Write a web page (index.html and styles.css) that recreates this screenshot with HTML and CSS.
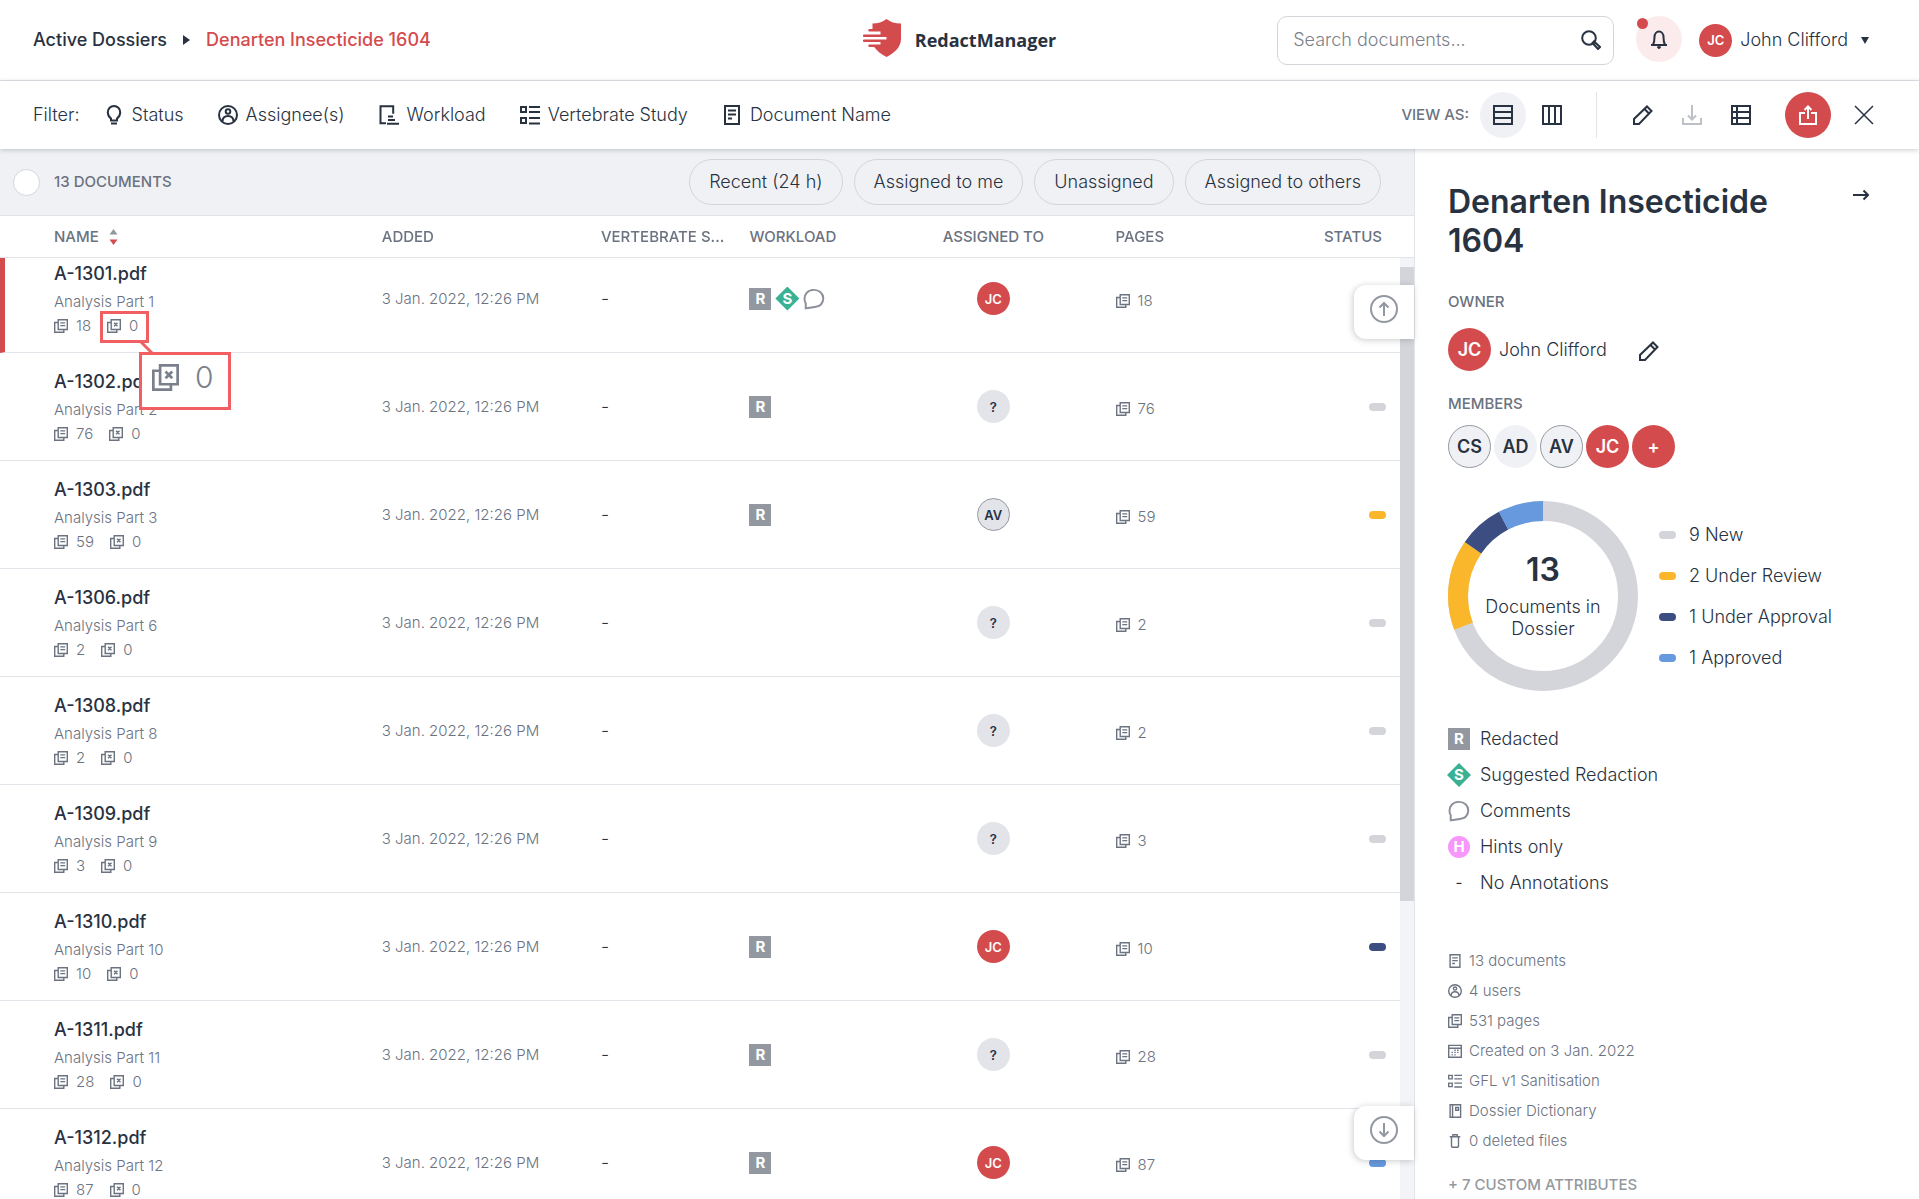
FILE: index.html
```html
<!DOCTYPE html>
<html lang="en">

<head>
    <meta charset="UTF-8">
    <meta name="viewport" content="width=device-width, initial-scale=1.0">
    <title>RedactManager</title>
    <link rel="stylesheet" href="styles.css">
</head>

<body>
    <!-- shared icons -->
    <svg class="sprite" aria-hidden="true">
        <symbol id="bulb" viewBox="0 0 20 20">
            <path d="M7 15.500v-2C5 12 3.800 10 3.800 7.200a6.200 6.200 0 0 1 12.400 0C16.200 10 15 12 13 13.500v2zM7 18.500h6" />
        </symbol>
        <symbol id="user" viewBox="0 0 20 20">
            <circle cx="10" cy="10" r="9" />
            <circle cx="10" cy="6.500" r="2.300" />
            <path d="M4.500 16.500c0-3.500 2.300-5.500 5.500-5.500s5.500 2 5.500 5.500" />
        </symbol>
        <symbol id="workload" viewBox="0 0 20 20">
            <path d="M7 18.200H1.500V1.300h12.700v7.500M9 11.500h5M9 15h7M8 18.700h12" />
        </symbol>
        <symbol id="list" viewBox="0 0 20 20">
            <path d="M1 2h5v5H1zM1 13h5v5H1zM9 2h11M9 7h11M9 13h11M9 18.500h11" />
        </symbol>
        <symbol id="doc" viewBox="0 0 20 20">
            <path d="M3 1h14v18H3zM6 5.500h8M6 9.500h8M6 13.500h4" />
        </symbol>
        <symbol id="pages" viewBox="0 0 20 20">
            <path d="M6 1h13v14H6zM6 5H1v14h13v-4M9 5.500h7M9 9.500h7" />
        </symbol>
        <symbol id="excluded" viewBox="0 0 20 20">
            <path d="M6 1h13v14H6zM6 5H1v14h13v-4M10 5.500l5 5M15 5.500l-5 5" />
        </symbol>
        <symbol id="pencil" viewBox="0 0 20 20">
            <path d="M1 19v-5L14 1.500l4.500 4.500L6 19zM11.500 4l4.500 4.500" />
        </symbol>
        <symbol id="comment" viewBox="0 0 20 20">
            <path d="M2.500 18.500V14C.8 11.500 1 7.300 3.300 4.500 6.200 1 12.500.8 16 3.800c3.200 3 3.200 8.200.3 11.200-3 3-8.300 2.300-13.800 3.500z" />
        </symbol>
        <symbol id="calendar" viewBox="0 0 20 20">
            <path d="M1 2h18v17H1zM1 6h18M5 15.500h2M9 15.500h2M9 12h2M13 12h2M13 9h2M9 9h2M5 12h2" />
        </symbol>
        <symbol id="book" viewBox="0 0 20 20">
            <path d="M3 1h15v18H3zM6.500 1v18M11 5h4v4h-4z" />
        </symbol>
        <symbol id="trash" viewBox="0 0 20 20">
            <path d="M2.500 4h15M5 4v13.500L6 19h8l1-1.500V4M7 3V1h6v2" />
        </symbol>
    </svg>

    <header class="header">
        <nav class="breadcrumbs">
            <a href="#">Active Dossiers</a>
            <svg class="crumb-arrow" viewBox="0 0 7 10"><path d="M0 0l7 5-7 5z" /></svg>
            <a href="#" class="current">Denarten Insecticide 1604</a>
        </nav>
        <a href="#" class="logo">
            <svg viewBox="0 0 38 38">
                <path class="shield" d="M23.500 0c4 3 8.500 4.500 14.500 4.500V20c0 8.500-7 14-14.500 18-5.500-3-9.500-6-12.300-10H6.500a1 1 0 0 1 0-2.500H17.500V23H1a1 1 0 0 1 0-2.500H23.500V18H1a1 1 0 0 1 0-2.500H17.500V12.500H6.500a1 1 0 0 1 0-2.500h3V4.500C15 4.500 19.500 3 23.500 0z" />
            </svg>
            <span>RedactManager</span>
        </a>
        <div class="header-right">
            <div class="search">
                <input type="text" aria-label="Search documents" placeholder="Search documents...">
                <svg class="icon" viewBox="0 0 20 20"><circle cx="8" cy="8" r="6.800" /><path d="M11.500 13l1.500-1.500 6 5.500-2 2z" /></svg>
            </div>
            <button class="round bell" type="button" aria-label="Notifications">
                <svg class="icon" viewBox="0 0 20 20"><path d="M2 16h16M4 16c1-2 1.500-4 1.500-8a4.500 5.500 0 0 1 9 0c0 4 .5 6 1.500 8M8.500 17.500l1.500 1.500 1.500-1.500" /></svg>
                <span class="bell-dot"></span>
            </button>
            <button class="user-menu" type="button">
                <span class="avatar red">JC</span>
                <span>John Clifford</span>
                <svg class="caret" viewBox="0 0 8 7"><path d="M0 0h8L4 7z" /></svg>
            </button>
        </div>
    </header>

    <div class="toolbar">
        <div class="filters">
            <span>Filter:</span>
            <button type="button"><svg class="icon"><use href="#bulb" /></svg>Status</button>
            <button type="button"><svg class="icon"><use href="#user" /></svg>Assignee(s)</button>
            <button type="button"><svg class="icon"><use href="#workload" /></svg>Workload</button>
            <button type="button"><svg class="icon"><use href="#list" /></svg>Vertebrate Study</button>
            <button type="button"><svg class="icon"><use href="#doc" /></svg>Document Name</button>
        </div>
        <div class="actions">
            <span class="caps">View as:</span>
            <button class="round selected" type="button" aria-label="List view">
                <svg class="icon" viewBox="0 0 20 20"><path d="M1 1h18v18H1zM1 7h18M1 13h18" /></svg>
            </button>
            <button class="round" type="button" aria-label="Board view">
                <svg class="icon" viewBox="0 0 20 20"><path d="M1 1h18v18H1zM7 1v18M13 1v18" /></svg>
            </button>
            <span class="divider"></span>
            <button class="round" type="button" aria-label="Edit dossier"><svg class="icon"><use href="#pencil" /></svg></button>
            <button class="round" type="button" aria-label="Download" disabled>
                <svg class="icon" viewBox="0 0 20 20"><path d="M1 13v6h18v-6M10 0v14M6 10.500l4 4 4-4" /></svg>
            </button>
            <button class="round" type="button" aria-label="Report">
                <svg class="icon" viewBox="0 0 20 20"><path d="M1 1h18v18H1zM6 1v18M1 7h18M1 13h18" /></svg>
            </button>
            <button class="round upload" type="button" aria-label="Upload">
                <svg class="icon" viewBox="0 0 20 20"><path d="M7 8H2v11h16V8h-5M10 14V1M6.500 5L10 1.500 13.500 5" /></svg>
            </button>
            <button class="round close" type="button" aria-label="Close">
                <svg class="icon" viewBox="0 0 20 20"><path d="M1 1l18 18M19 1L1 19" /></svg>
            </button>
        </div>
    </div>

    <div class="content">
        <main class="documents">
            <div class="list-bar">
                <input type="checkbox" id="select-all" class="select-all">
                <label for="select-all" class="caps">13 documents</label>
                <div class="chips">
                    <button type="button">Recent (24 h)</button>
                    <button type="button">Assigned to me</button>
                    <button type="button">Unassigned</button>
                    <button type="button">Assigned to others</button>
                </div>
            </div>

            <div class="list-wrap">
                <div class="list">
                    <table>
                        <thead>
                            <tr>
                                <th class="col-name">Name
                                    <svg class="sort" viewBox="0 0 8 16"><path class="up" d="M0 5.500h8L4 0z" /><path class="down" d="M0 10.500h8L4 16z" /></svg>
                                </th>
                                <th class="col-added">Added</th>
                                <th class="col-study">Vertebrate S...</th>
                                <th class="col-workload">Workload</th>
                                <th class="col-assigned">Assigned to</th>
                                <th class="col-pages">Pages</th>
                                <th class="col-status">Status</th>
                            </tr>
                        </thead>
                        <tbody>
                            <tr class="active">
                                <td>
                                    <a href="#" class="name">A-1301.pdf</a>
                                    <div class="template">Analysis Part 1</div>
                                    <div class="stats"><svg class="icon"><use href="#pages" /></svg><span>18</span><svg class="icon"><use href="#excluded" /></svg><span>0</span></div>
                                </td>
                                <td>3 Jan. 2022, 12:26 PM</td>
                                <td class="dark">-</td>
                                <td>
                                    <div class="work"><span class="badge redacted">R</span><span class="badge suggested">S</span><svg class="icon comment"><use href="#comment" /></svg></div>
                                </td>
                                <td class="center"><span class="avatar red">JC</span></td>
                                <td><div class="page-count"><svg class="icon"><use href="#pages" /></svg>18</div></td>
                                <td class="right"><span class="dot new"></span></td>
                            </tr>
                            <tr>
                                <td>
                                    <a href="#" class="name">A-1302.pdf</a>
                                    <div class="template">Analysis Part 2</div>
                                    <div class="stats"><svg class="icon"><use href="#pages" /></svg><span>76</span><svg class="icon"><use href="#excluded" /></svg><span>0</span></div>
                                </td>
                                <td>3 Jan. 2022, 12:26 PM</td>
                                <td class="dark">-</td>
                                <td><div class="work"><span class="badge redacted">R</span></div></td>
                                <td class="center"><span class="avatar">?</span></td>
                                <td><div class="page-count"><svg class="icon"><use href="#pages" /></svg>76</div></td>
                                <td class="right"><span class="dot new"></span></td>
                            </tr>
                            <tr>
                                <td>
                                    <a href="#" class="name">A-1303.pdf</a>
                                    <div class="template">Analysis Part 3</div>
                                    <div class="stats"><svg class="icon"><use href="#pages" /></svg><span>59</span><svg class="icon"><use href="#excluded" /></svg><span>0</span></div>
                                </td>
                                <td>3 Jan. 2022, 12:26 PM</td>
                                <td class="dark">-</td>
                                <td><div class="work"><span class="badge redacted">R</span></div></td>
                                <td class="center"><span class="avatar outlined">AV</span></td>
                                <td><div class="page-count"><svg class="icon"><use href="#pages" /></svg>59</div></td>
                                <td class="right"><span class="dot review"></span></td>
                            </tr>
                            <tr>
                                <td>
                                    <a href="#" class="name">A-1306.pdf</a>
                                    <div class="template">Analysis Part 6</div>
                                    <div class="stats"><svg class="icon"><use href="#pages" /></svg><span>2</span><svg class="icon"><use href="#excluded" /></svg><span>0</span></div>
                                </td>
                                <td>3 Jan. 2022, 12:26 PM</td>
                                <td class="dark">-</td>
                                <td></td>
                                <td class="center"><span class="avatar">?</span></td>
                                <td><div class="page-count"><svg class="icon"><use href="#pages" /></svg>2</div></td>
                                <td class="right"><span class="dot new"></span></td>
                            </tr>
                            <tr>
                                <td>
                                    <a href="#" class="name">A-1308.pdf</a>
                                    <div class="template">Analysis Part 8</div>
                                    <div class="stats"><svg class="icon"><use href="#pages" /></svg><span>2</span><svg class="icon"><use href="#excluded" /></svg><span>0</span></div>
                                </td>
                                <td>3 Jan. 2022, 12:26 PM</td>
                                <td class="dark">-</td>
                                <td></td>
                                <td class="center"><span class="avatar">?</span></td>
                                <td><div class="page-count"><svg class="icon"><use href="#pages" /></svg>2</div></td>
                                <td class="right"><span class="dot new"></span></td>
                            </tr>
                            <tr>
                                <td>
                                    <a href="#" class="name">A-1309.pdf</a>
                                    <div class="template">Analysis Part 9</div>
                                    <div class="stats"><svg class="icon"><use href="#pages" /></svg><span>3</span><svg class="icon"><use href="#excluded" /></svg><span>0</span></div>
                                </td>
                                <td>3 Jan. 2022, 12:26 PM</td>
                                <td class="dark">-</td>
                                <td></td>
                                <td class="center"><span class="avatar">?</span></td>
                                <td><div class="page-count"><svg class="icon"><use href="#pages" /></svg>3</div></td>
                                <td class="right"><span class="dot new"></span></td>
                            </tr>
                            <tr>
                                <td>
                                    <a href="#" class="name">A-1310.pdf</a>
                                    <div class="template">Analysis Part 10</div>
                                    <div class="stats"><svg class="icon"><use href="#pages" /></svg><span>10</span><svg class="icon"><use href="#excluded" /></svg><span>0</span></div>
                                </td>
                                <td>3 Jan. 2022, 12:26 PM</td>
                                <td class="dark">-</td>
                                <td><div class="work"><span class="badge redacted">R</span></div></td>
                                <td class="center"><span class="avatar red">JC</span></td>
                                <td><div class="page-count"><svg class="icon"><use href="#pages" /></svg>10</div></td>
                                <td class="right"><span class="dot approval"></span></td>
                            </tr>
                            <tr>
                                <td>
                                    <a href="#" class="name">A-1311.pdf</a>
                                    <div class="template">Analysis Part 11</div>
                                    <div class="stats"><svg class="icon"><use href="#pages" /></svg><span>28</span><svg class="icon"><use href="#excluded" /></svg><span>0</span></div>
                                </td>
                                <td>3 Jan. 2022, 12:26 PM</td>
                                <td class="dark">-</td>
                                <td><div class="work"><span class="badge redacted">R</span></div></td>
                                <td class="center"><span class="avatar">?</span></td>
                                <td><div class="page-count"><svg class="icon"><use href="#pages" /></svg>28</div></td>
                                <td class="right"><span class="dot new"></span></td>
                            </tr>
                            <tr>
                                <td>
                                    <a href="#" class="name">A-1312.pdf</a>
                                    <div class="template">Analysis Part 12</div>
                                    <div class="stats"><svg class="icon"><use href="#pages" /></svg><span>87</span><svg class="icon"><use href="#excluded" /></svg><span>0</span></div>
                                </td>
                                <td>3 Jan. 2022, 12:26 PM</td>
                                <td class="dark">-</td>
                                <td><div class="work"><span class="badge redacted">R</span></div></td>
                                <td class="center"><span class="avatar red">JC</span></td>
                                <td><div class="page-count"><svg class="icon"><use href="#pages" /></svg>87</div></td>
                                <td class="right"><span class="dot approved"></span></td>
                            </tr>
                        </tbody>
                    </table>
                </div>
                <div class="track"><div class="thumb"></div></div>
                <button class="jump jump-up" type="button" aria-label="Scroll to top">
                    <svg class="icon" viewBox="0 0 28 28"><circle cx="14" cy="14" r="13" /><path d="M14 21V8M9.500 12.500L14 8l4.500 4.500" /></svg>
                </button>
                <button class="jump jump-down" type="button" aria-label="Scroll to bottom">
                    <svg class="icon" viewBox="0 0 28 28"><circle cx="14" cy="14" r="13" /><path d="M14 7v13M9.500 15.500L14 20l4.500-4.500" /></svg>
                </button>

                <!-- magnifier over the excluded pages count -->
                <div class="callout callout-small"></div>
                <svg class="callout-line" viewBox="0 0 14 12"><path d="M1 0l12 12" /></svg>
                <div class="callout callout-big">
                    <svg class="icon"><use href="#excluded" /></svg>
                    <span>0</span>
                </div>
            </div>
        </main>

        <aside class="details">
            <div class="title-row">
                <h1>Denarten Insecticide 1604</h1>
                <button class="collapse" type="button" aria-label="Collapse details">
                    <svg class="icon" viewBox="0 0 16 12"><path d="M0 6h15M10.500 1.500L15 6l-4.500 4.500" /></svg>
                </button>
            </div>

            <h2 class="caps">Owner</h2>
            <div class="owner">
                <span class="avatar large red">JC</span>
                <span>John Clifford</span>
                <button type="button" aria-label="Change owner"><svg class="icon"><use href="#pencil" /></svg></button>
            </div>

            <h2 class="caps">Members</h2>
            <div class="members">
                <span class="avatar large outlined">CS</span>
                <span class="avatar large">AD</span>
                <span class="avatar large outlined">AV</span>
                <span class="avatar large red">JC</span>
                <button class="avatar large red" type="button" aria-label="Add member">+</button>
            </div>

            <div class="chart-row">
                <div class="chart">
                    <svg viewBox="0 0 190 190">
                        <g transform="rotate(-90 95 95)">
                            <circle class="arc new" cx="95" cy="95" r="85" />
                            <circle class="arc review" cx="95" cy="95" r="85" pathLength="13" stroke-dasharray="2 11" stroke-dashoffset="-9" />
                            <circle class="arc approval" cx="95" cy="95" r="85" pathLength="13" stroke-dasharray="1 12" stroke-dashoffset="-11" />
                            <circle class="arc approved" cx="95" cy="95" r="85" pathLength="13" stroke-dasharray="1 12" stroke-dashoffset="-12" />
                        </g>
                    </svg>
                    <div class="chart-text">
                        <strong>13</strong>
                        <span>Documents in Dossier</span>
                    </div>
                </div>
                <ul class="legend">
                    <li><span class="dot new"></span>9 New</li>
                    <li><span class="dot review"></span>2 Under Review</li>
                    <li><span class="dot approval"></span>1 Under Approval</li>
                    <li><span class="dot approved"></span>1 Approved</li>
                </ul>
            </div>

            <ul class="annotations">
                <li><span class="badge redacted">R</span>Redacted</li>
                <li><span class="badge suggested">S</span>Suggested Redaction</li>
                <li><svg class="icon comment"><use href="#comment" /></svg>Comments</li>
                <li><span class="badge hint">H</span>Hints only</li>
                <li><span class="badge none">-</span>No Annotations</li>
            </ul>

            <ul class="facts">
                <li><svg class="icon"><use href="#doc" /></svg>13 documents</li>
                <li><svg class="icon"><use href="#user" /></svg>4 users</li>
                <li><svg class="icon"><use href="#pages" /></svg>531 pages</li>
                <li><svg class="icon"><use href="#calendar" /></svg>Created on 3 Jan. 2022</li>
                <li><svg class="icon"><use href="#list" /></svg>GFL v1 Sanitisation</li>
                <li><svg class="icon"><use href="#book" /></svg>Dossier Dictionary</li>
                <li><svg class="icon"><use href="#trash" /></svg>0 deleted files</li>
            </ul>

            <a href="#" class="caps more">+ 7 custom attributes</a>
        </aside>
    </div>

    <script>
        // the list opens slightly scrolled
        document.querySelector(".list").scrollTop = 13;
    </script>
</body>
</html>
```
FILE: styles.css
```css
* {
    box-sizing: border-box;
}

body {
    margin: 0;
    height: 100vh;
    display: flex;
    flex-direction: column;
    overflow: hidden;
    font-family: Inter, sans-serif;
    font-size: 18px;
    font-weight: 300;
    line-height: 24px;
    color: #283241;
    background-color: #fff;
}

a {
    color: inherit;
    text-decoration: none;
}

button {
    padding: 0;
    border: none;
    background: none;
    font: inherit;
    color: inherit;
    cursor: pointer;
}

ul {
    margin: 0;
    padding: 0;
    list-style: none;
}

h1,
h2 {
    margin: 0;
}

.sprite {
    display: none;
}

.icon {
    width: 20px;
    height: 20px;
    flex-shrink: 0;
    fill: none;
    stroke: currentColor;
    stroke-width: 2;
}

.caps {
    font-size: 15px;
    font-weight: 500;
    line-height: 20px;
    text-transform: uppercase;
    color: #6b7280;
}

/* top header */
.header {
    flex-shrink: 0;
    height: 81px;
    padding: 0 33px;
    display: grid;
    grid-template-columns: 1fr auto 1fr;
    align-items: center;
    border-bottom: 1px solid #e2e4e9;
}

.breadcrumbs {
    display: flex;
    align-items: center;
    gap: 16px;
    font-weight: 500;
}

.breadcrumbs .current {
    color: #d44b4e;
}

.crumb-arrow {
    width: 7px;
    height: 10px;
    fill: currentColor;
}

.logo {
    display: flex;
    align-items: center;
    gap: 14px;
    font-family: "Open Sans", sans-serif;
    font-weight: 700;
}

.logo svg {
    width: 38px;
    height: 38px;
    margin-bottom: 5px;
}

.shield {
    fill: #d44b4e;
}

.header-right {
    padding-right: 17px;
    display: flex;
    justify-content: flex-end;
    align-items: center;
}

.search {
    width: 337px;
    height: 49px;
    margin-right: 22px;
    padding: 0 12px 0 15px;
    display: flex;
    align-items: center;
    border: 1px solid #d3d5da;
    border-radius: 10px;
}

.search input {
    flex: 1;
    min-width: 0;
    padding: 0;
    border: none;
    outline: none;
    font: inherit;
    color: inherit;
}

.search input::placeholder {
    color: #7b818c;
}

.round {
    position: relative;
    width: 46px;
    height: 46px;
    flex-shrink: 0;
    display: flex;
    align-items: center;
    justify-content: center;
    border-radius: 50%;
}

.bell {
    margin-right: 17px;
    margin-bottom: 3px;
    background-color: #fbebec;
}

.bell-dot {
    position: absolute;
    top: 2px;
    left: 1px;
    width: 11px;
    height: 11px;
    border-radius: 50%;
    background-color: #d44b4e;
}

.user-menu {
    display: flex;
    align-items: center;
    gap: 8px;
}

.caret {
    width: 8px;
    height: 7px;
    margin-left: 5px;
    fill: currentColor;
}

.avatar {
    width: 33px;
    height: 33px;
    flex-shrink: 0;
    display: inline-flex;
    align-items: center;
    justify-content: center;
    border-radius: 50%;
    background-color: #e2e4e9;
    color: #283241;
    font-size: 13px;
    font-weight: 600;
}

.avatar.outlined {
    border: 1px solid #9398a0;
}

.avatar.large {
    width: 43px;
    height: 43px;
    background-color: #f0f1f4;
    font-size: 18px;
}

.avatar.red {
    background-color: #d44b4e;
    color: #fff;
}

/* filters and view buttons */
.toolbar {
    position: relative;
    z-index: 3;
    flex-shrink: 0;
    height: 68px;
    padding: 0 32px 0 33px;
    display: flex;
    align-items: center;
    justify-content: space-between;
    background-color: #fff;
    box-shadow: 0 1px 5px rgba(40, 50, 65, 0.25);
}

.filters,
.actions {
    display: flex;
    align-items: center;
}

.filters {
    gap: 34px;
}

.filters button {
    display: flex;
    align-items: center;
    gap: 8px;
}

.filters span {
    margin-right: -10px;
}

.actions {
    gap: 3px;
}

.actions .caps {
    margin-right: 8px;
}

.actions .selected {
    background-color: #f0f1f4;
}

.actions .divider {
    width: 1px;
    height: 46px;
    margin: 0 20px 0 18px;
    background-color: #e2e4e9;
}

.actions button:disabled {
    opacity: 0.3;
}

.actions .upload {
    margin: 0 7px 0 18px;
    background-color: #d44b4e;
    color: #fff;
}

.actions .close .icon {
    stroke-width: 1.5;
}

.content {
    flex: 1;
    min-height: 0;
    display: flex;
}

/* document list */
.documents {
    flex: 1;
    min-width: 0;
    display: flex;
    flex-direction: column;
}

.list-bar {
    height: 67px;
    flex-shrink: 0;
    padding: 0 33px 0 13px;
    display: flex;
    align-items: center;
    gap: 14px;
    background-color: #f0f1f4;
    border-bottom: 1px solid #e2e4e9;
}

.select-all {
    appearance: none;
    width: 27px;
    height: 27px;
    margin: 0;
    border: 1px solid #d3d5da;
    border-radius: 50%;
    background-color: #fff;
}

.chips {
    margin-left: auto;
    display: flex;
    gap: 11px;
}

.chips button {
    height: 46px;
    padding: 0 19px;
    border: 1px solid #d3d5da;
    border-radius: 23px;
}

.list-wrap {
    position: relative;
    flex: 1;
    min-height: 0;
}

.list {
    height: 100%;
    overflow-y: auto;
    scrollbar-width: none;
}

table {
    width: 100%;
    table-layout: fixed;
    border-collapse: separate;
    border-spacing: 0;
}

th {
    position: sticky;
    top: 0;
    z-index: 1;
    height: 42px;
    padding: 0;
    background-color: #fff;
    border-bottom: 1px solid #e2e4e9;
    font-size: 15px;
    font-weight: 500;
    line-height: 20px;
    text-align: left;
    text-transform: uppercase;
    white-space: nowrap;
    color: #6b7280;
}

th.col-name {
    width: 27%;
    padding-left: 54px;
}

.col-added {
    width: 15.5%;
}

.col-study {
    width: 10.5%;
}

.col-workload {
    width: 8.6%;
}

.col-assigned {
    width: 17.3%;
}

th.col-assigned {
    text-align: center;
}

.col-pages {
    width: 9%;
}

th.col-status {
    padding-right: 32px;
    text-align: right;
}

.sort {
    width: 9px;
    height: 16px;
    margin-left: 6px;
    vertical-align: -3px;
}

.sort .up {
    fill: #9398a0;
}

.sort .down {
    fill: #d44b4e;
}

td {
    height: 108px;
    padding: 0;
    border-bottom: 1px solid #e2e4e9;
    font-size: 15px;
    line-height: 20px;
    color: #6b7280;
}

td:first-child {
    padding-left: 54px;
}

.active td:first-child {
    padding-left: 49px;
    border-left: 5px solid #d44b4e;
}

td.dark {
    color: #283241;
    font-size: 18px;
}

td.center {
    text-align: center;
}

td.right {
    padding-right: 28px;
    text-align: right;
}

.name {
    display: block;
    margin-bottom: 6px;
    font-size: 18px;
    font-weight: 500;
    line-height: 24px;
    color: #283241;
}

.stats {
    margin-top: 4px;
    display: flex;
    align-items: center;
    gap: 8px;
}

.stats span {
    margin-right: 8px;
}

.stats .icon,
.page-count .icon {
    width: 14px;
    height: 14px;
}

.page-count {
    padding-top: 4px;
    display: flex;
    align-items: center;
    gap: 8px;
}

.work {
    display: flex;
    align-items: center;
    gap: 5px;
}

.badge {
    width: 22px;
    height: 22px;
    flex-shrink: 0;
    display: flex;
    align-items: center;
    justify-content: center;
    font-size: 15px;
    font-weight: 700;
    line-height: 20px;
    color: #fff;
}

.badge.redacted {
    background-color: #9398a0;
}

/* diamond, slightly wider than the square badge */
.badge.suggested {
    width: 24px;
    height: 24px;
    margin: 0 -1px;
    background-color: #3bb193;
    clip-path: polygon(50% 0, 100% 50%, 50% 100%, 0 50%);
}

.badge.hint {
    border-radius: 50%;
    background-color: #f796fb;
}

.badge.none {
    font-weight: 400;
    color: #283241;
}

.comment {
    width: 22px;
    height: 22px;
    color: #8b909a;
    stroke-width: 1.8;
}

.dot {
    display: inline-block;
    width: 17px;
    height: 8px;
    border-radius: 4px;
    vertical-align: middle;
}

.dot.new {
    background-color: #d3d5da;
}

.dot.review {
    background-color: #fbb72b;
}

.dot.approval {
    background-color: #3c4d82;
}

.dot.approved {
    background-color: #6699dd;
}

.track {
    position: absolute;
    top: 42px;
    right: 0;
    bottom: 0;
    width: 14px;
    padding-top: 9px;
    background-color: #f3f4f7;
}

.thumb {
    height: 68%;
    background-color: #d3d5da;
}

.jump {
    position: absolute;
    right: 0;
    z-index: 2;
    width: 60px;
    height: 54px;
    padding: 0 0 6px;
    display: flex;
    align-items: center;
    justify-content: center;
    background-color: #fff;
    border-radius: 12px 0 0 12px;
    box-shadow: -1px 1px 6px rgba(40, 50, 65, 0.25);
    color: #9398a0;
}

.jump .icon {
    width: 28px;
    height: 28px;
}

.jump-up {
    top: 69px;
}

.jump-down {
    bottom: 39px;
}

/* magnifier */
.callout {
    position: absolute;
    border: 3px solid #f25f63;
}

.callout-small {
    top: 95px;
    left: 100px;
    width: 49px;
    height: 32px;
}

.callout-line {
    position: absolute;
    top: 126px;
    left: 140px;
    width: 14px;
    height: 12px;
    fill: none;
    stroke: #f25f63;
    stroke-width: 3;
}

.callout-big {
    top: 136px;
    left: 139px;
    width: 92px;
    height: 58px;
    padding: 0 0 8px 10px;
    display: flex;
    align-items: center;
    gap: 16px;
    background-color: #fff;
    font-size: 30px;
    color: #7b818c;
}

.callout-big .icon {
    width: 27px;
    height: 27px;
}

/* dossier details */
.details {
    width: 505px;
    flex-shrink: 0;
    padding: 33px 50px 0 33px;
    overflow: hidden;
    border-left: 1px solid #e2e4e9;
}

.title-row {
    margin-bottom: 32px;
    display: flex;
    justify-content: space-between;
    align-items: flex-start;
}

.title-row h1 {
    max-width: 350px;
    font-size: 32px;
    font-weight: 600;
    line-height: 39px;
    font-optical-sizing: none;
}

.collapse .icon {
    width: 16px;
    height: 12px;
    margin-top: 7px;
}

.owner {
    margin: 16px 0 23px;
    display: flex;
    align-items: center;
    gap: 8px;
}

.owner button {
    margin-left: 24px;
    padding-top: 8px;
}

.members {
    margin-top: 11px;
    display: flex;
    gap: 3px;
}

.chart-row {
    margin-top: 33px;
    display: flex;
    align-items: center;
    gap: 21px;
}

.chart {
    position: relative;
    width: 190px;
    height: 190px;
}

.arc {
    fill: none;
    stroke-width: 20;
}

.arc.new {
    stroke: #d3d5da;
}

.arc.review {
    stroke: #fbb72b;
}

.arc.approval {
    stroke: #3c4d82;
}

.arc.approved {
    stroke: #6699dd;
}

.chart-text {
    position: absolute;
    inset: 0;
    padding: 0 34px;
    display: flex;
    flex-direction: column;
    justify-content: center;
    gap: 8px;
    text-align: center;
    line-height: 22px;
}

.chart-text strong {
    font-size: 32px;
    font-weight: 600;
    line-height: 36px;
    font-optical-sizing: none;
}

.legend {
    display: flex;
    flex-direction: column;
    gap: 17px;
}

.legend li {
    display: flex;
    align-items: center;
    gap: 13px;
}

.annotations {
    margin-top: 36px;
    display: flex;
    flex-direction: column;
    gap: 12px;
}

.annotations li {
    display: flex;
    align-items: center;
    gap: 10px;
}

.facts {
    margin-top: 56px;
    display: flex;
    flex-direction: column;
    gap: 10px;
    font-size: 15px;
    line-height: 20px;
    color: #6b7280;
}

.facts li {
    display: flex;
    align-items: center;
    gap: 7px;
}

.facts .icon {
    width: 14px;
    height: 14px;
}

.more {
    display: block;
    margin-top: 24px;
    color: #9398a0;
}
```
